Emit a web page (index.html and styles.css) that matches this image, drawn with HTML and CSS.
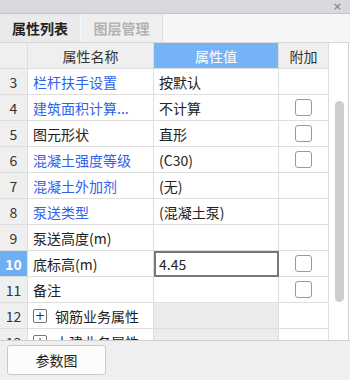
FILE: index.html
```html
<!DOCTYPE html>
<html>
<head>
<meta charset="utf-8">
<link rel="stylesheet" href="styles.css">
</head>
<body>
<div class="titlebar"><span class="close">×</span></div>
<div class="tabs">
  <div class="tab active">属性列表</div>
  <div class="tab">图层管理</div>
  <div class="tabfill"></div>
</div>
<div class="panel">
  <div class="grid">
    <div class="c num hd"></div>
    <div class="c hd center">属性名称</div>
    <div class="c hd center sel">属性值</div>
    <div class="c hd center">附加</div>

    <div class="c num">3</div><div class="c name link">栏杆扶手设置</div><div class="c val">按默认</div><div class="c ex"></div>
    <div class="c num">4</div><div class="c name link">建筑面积计算...</div><div class="c val">不计算</div><div class="c ex"><span class="cb"></span></div>
    <div class="c num">5</div><div class="c name">图元形状</div><div class="c val">直形</div><div class="c ex"><span class="cb"></span></div>
    <div class="c num">6</div><div class="c name link">混凝土强度等级</div><div class="c val">(C30)</div><div class="c ex"><span class="cb"></span></div>
    <div class="c num">7</div><div class="c name link">混凝土外加剂</div><div class="c val">(无)</div><div class="c ex"></div>
    <div class="c num">8</div><div class="c name link">泵送类型</div><div class="c val">(混凝土泵)</div><div class="c ex"></div>
    <div class="c num">9</div><div class="c name">泵送高度(m)</div><div class="c val"></div><div class="c ex"></div>
    <div class="c num cur">10</div><div class="c name">底标高(m)</div><div class="c val edit">4.45</div><div class="c ex"><span class="cb"></span></div>
    <div class="c num">11</div><div class="c name">备注</div><div class="c val"></div><div class="c ex"><span class="cb"></span></div>
    <div class="c num">12</div><div class="c name"><span class="plus">+</span>钢筋业务属性</div><div class="c val grp"></div><div class="c ex"></div>
    <div class="c num">13</div><div class="c name"><span class="plus">+</span>土建业务属性</div><div class="c val grp"></div><div class="c ex"></div>
  </div>
  <div class="scroll"><div class="thumb"></div></div>
</div>
<div class="footer">
  <button class="btn">参数图</button>
</div>
</body>
</html>
```
FILE: styles.css
```css
* { box-sizing: border-box; }
html, body { margin: 0; padding: 0; }
body {
  width: 350px;
  height: 380px;
  overflow: hidden;
  font-family: "Noto Sans CJK SC", "Noto Sans", sans-serif;
  font-size: 14px;
  color: #222;
  background: #efefef;
}
.titlebar {
  height: 14px;
  background: #d9d9dd;
  border-bottom: 1px solid #c6c6c9;
  display: flex;
  justify-content: flex-end;
  align-items: center;
  padding-right: 8px;
}
.close {
  font-size: 11px;
  line-height: 11px;
  color: #8a8a8a;
  font-family: "DejaVu Sans", sans-serif;
  font-weight: bold;
}
.tabs {
  height: 29px;
  display: flex;
  background: #f6f6f6;
  border-bottom: 1px solid #d6d6d6;
}
.tab {
  width: 81px;
  display: flex;
  align-items: center;
  justify-content: center;
  font-weight: bold;
  font-size: 14px;
  color: #b3b3b3;
  background: #efefef;
  border-right: 1px solid #dedede;
}
.tab.active {
  color: #222;
  background: #eaeaea;
  border-right: 1px solid #f6f6f6;
}
.tab + .tab { width: 82px; }
.tabfill { flex: 1; }
.panel {
  height: 298px;
  display: flex;
  background: #fff;
  border-bottom: 1px solid #cfcfcf;
  overflow: hidden;
}
.grid {
  width: 329px;
  display: grid;
  grid-template-columns: 28px 126px 125px 50px;
  grid-auto-rows: 26px;
  grid-template-rows: 26px;
  align-content: start;
}
.c {
  border-right: 1px solid #dedede;
  border-bottom: 1px solid #dedede;
  display: flex;
  align-items: center;
  white-space: nowrap;
  overflow: hidden;
}
.hd {
  background: #efefef;
  color: #333;
}
.center { justify-content: center; }
.hd.sel {
  background: #76b3f6;
  color: #fff;
}
.num {
  background: #efefef;
  justify-content: center;
  color: #333;
  font-size: 14px;
}
.num.cur {
  background: #6eaef4;
  color: #fff;
  font-weight: bold;
}
.name { padding-left: 5px; }
.link { color: #2f63ea; }
.val { padding-left: 5px; }
.val.grp { background: #ececec; }
.val.edit {
  border: 2px solid #777;
  padding-left: 3px;
}
.ex { justify-content: center; }
.cb {
  width: 17px;
  height: 17px;
  border: 1.5px solid #999;
  border-radius: 3px;
  background: #fff;
}
.plus {
  width: 14px;
  height: 14px;
  border: 1px solid #777;
  border-radius: 2px;
  display: inline-flex;
  align-items: center;
  justify-content: center;
  font-size: 12px;
  line-height: 1;
  margin-right: 8px;
  font-family: "DejaVu Sans", sans-serif;
  color: #333;
}
.scroll {
  flex: 1;
  border-right: 1px solid #cfcfcf;
  margin-right: 1px;
  padding: 58px 0 0 6px;
}
.thumb {
  width: 9px;
  height: 201px;
  border-radius: 5px;
  background: #cdcdcd;
}
.footer {
  height: 39px;
  padding: 4px 0 0 7px;
}
.btn {
  width: 99px;
  height: 30px;
  background: #fcfcfc;
  border: 1px solid #c9c9c9;
  border-radius: 3px;
  font-family: "Noto Sans CJK SC", sans-serif;
  font-size: 14px;
  color: #222;
  padding: 0;
}
```
